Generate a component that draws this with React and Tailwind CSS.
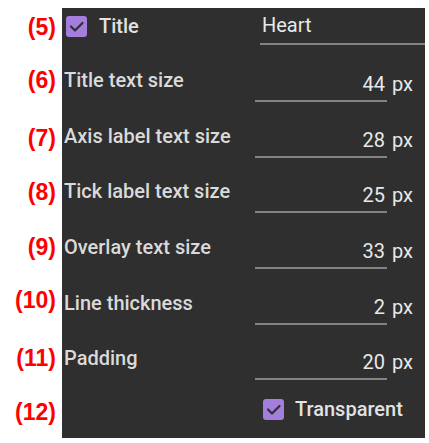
import React from "react";

const rows = [
  { id: 5, h: "h-[46px]", redPad: "pt-[5px]" },
  { id: 6, h: "h-[56px]", redPad: "pt-[12px]", label: "Title text size", value: "44" },
  { id: 7, h: "h-[55px]", redPad: "pt-[14px]", label: "Axis label text size", value: "28" },
  { id: 8, h: "h-[56px]", redPad: "pt-[13px]", label: "Tick label text size", value: "25" },
  { id: 9, h: "h-[56px]", redPad: "pt-[12px]", label: "Overlay text size", value: "33" },
  { id: 10, h: "h-[55px]", redPad: "pt-[9px]", label: "Line thickness", value: "2" },
  { id: 11, h: "h-[56px]", redPad: "pt-[12px]", label: "Padding", value: "20" },
  { id: 12, h: "h-[50px]", redPad: "pt-[10px]" },
];

const CheckBox = () => (
  <svg width="21" height="21" viewBox="0 0 21 21" className="shrink-0">
    <rect x="0" y="0" width="21" height="21" rx="3" fill="#a37edc" />
    <path
      d="M5 10.5 L9 14.5 L16.5 7"
      fill="none"
      stroke="#2f2f2f"
      strokeWidth="2.2"
      strokeLinecap="round"
      strokeLinejoin="round"
    />
  </svg>
);

const SizeRow = ({ label, value, h }) => (
  <div className={`flex ${h} items-start`}>
    <div className="w-[193px] pl-[2px] pt-[14px] text-[20px] leading-[24px] font-medium text-[#dadada] whitespace-nowrap">
      {label}
    </div>
    <div className="w-[132px] pt-[18px]">
      <div className="pr-[2px] pb-[4px] text-right text-[20px] leading-[24px] text-[#e8e8e8]">
        {value}
      </div>
      <div className="h-[2px] bg-[#838383]" />
    </div>
    <div className="pl-[5px] pt-[18px] text-[20px] leading-[24px] text-[#e8e8e8]">
      px
    </div>
  </div>
);

export default function App() {
  return (
    <div
      className="flex w-[429px] h-[443px] bg-white"
      style={{ fontFamily: "Roboto, 'Liberation Sans', sans-serif" }}
    >
      {/* Red step numbers */}
      <div className="w-[62px] pt-[8px]">
        {rows.map(({ id, h, redPad }) => (
          <div
            key={id}
            className={`${h} ${redPad} pr-[6px] text-right text-[23px] leading-[28px] font-bold text-[#ff0000]`}
            style={{ fontFamily: "'Liberation Sans', Arial, sans-serif" }}
          >
            ({id})
          </div>
        ))}
      </div>

      {/* Settings panel */}
      <div className="w-[363px] mt-[8px] h-[430px] bg-[#2f2f2f]">
        {/* Title row */}
        <div className="flex h-[46px] items-start">
          <div className="flex w-[198px] items-center pl-[4px] pt-[8px]">
            <CheckBox />
            <span className="ml-[12px] text-[20px] leading-[21px] font-medium text-[#e2e2e2]">
              Title
            </span>
          </div>
          <div className="flex-1 pt-[5px]">
            <div className="pl-[2px] pb-[6px] text-[20px] leading-[24px] text-[#e8e8e8]">
              Heart
            </div>
            <div className="h-[2px] bg-[#838383]" />
          </div>
        </div>

        {rows
          .filter((r) => r.label)
          .map((r) => (
            <SizeRow key={r.id} {...r} />
          ))}

        {/* Transparent row */}
        <div className="flex h-[50px] items-start pl-[201px] pt-[11px]">
          <CheckBox />
          <span className="ml-[11px] text-[20px] leading-[21px] font-medium text-[#e2e2e2]">
            Transparent
          </span>
        </div>
      </div>
    </div>
  );
}
